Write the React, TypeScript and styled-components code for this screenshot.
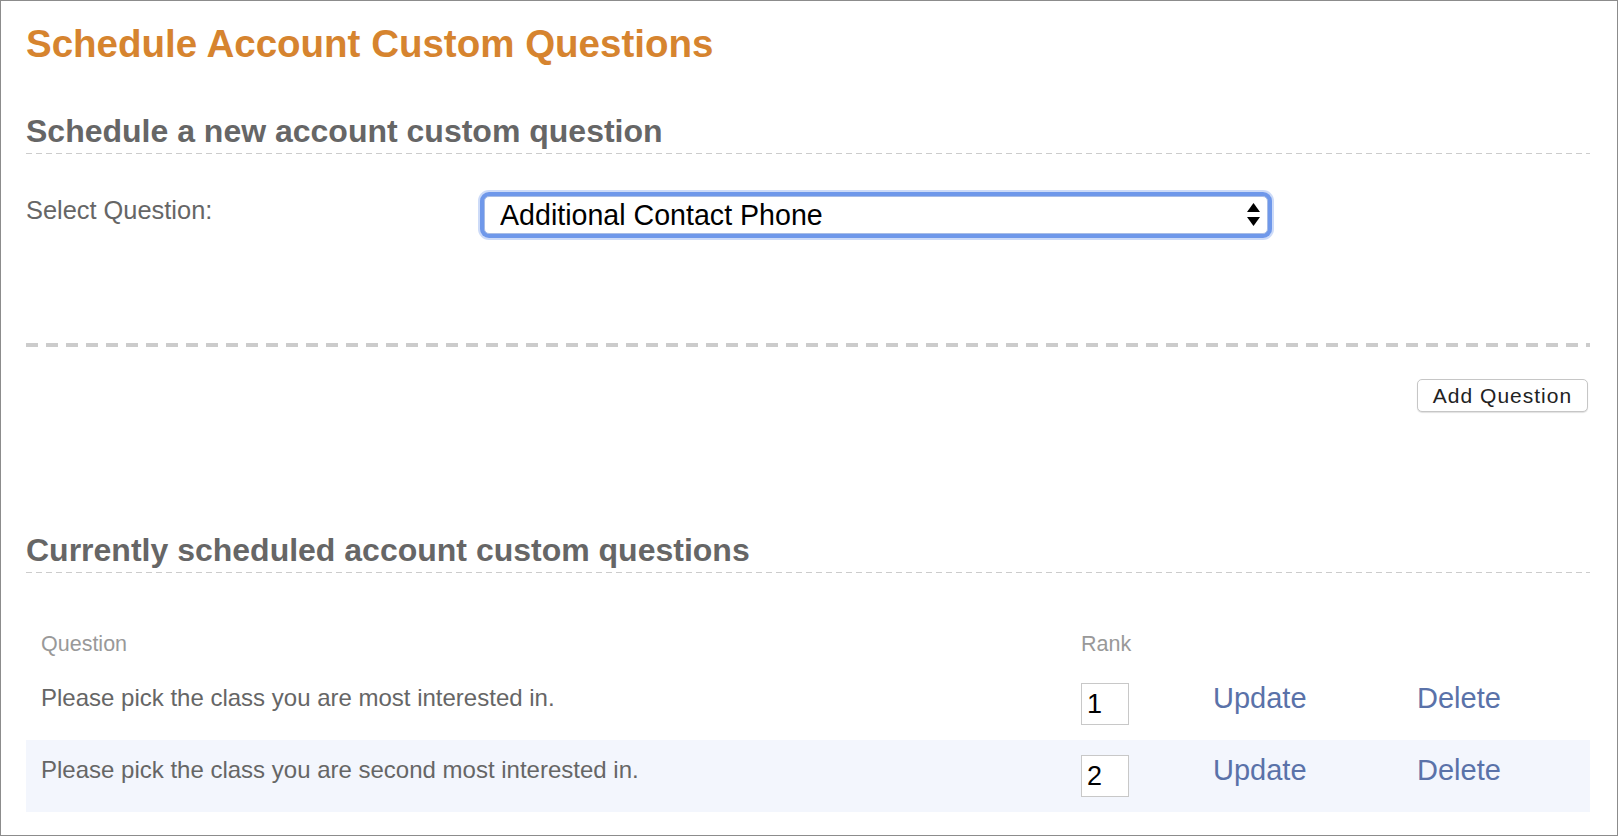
import React from 'react';
import styled, { createGlobalStyle } from 'styled-components';

const GlobalStyle = createGlobalStyle`
  html, body {
    margin: 0;
    padding: 0;
    background: #ffffff;
  }

  body {
    font-family: 'Liberation Sans', Arial, Helvetica, sans-serif;
  }

  * {
    box-sizing: border-box;
  }
`;

const questions = [
  { id: 1, text: 'Please pick the class you are most interested in.', rank: '1' },
  { id: 2, text: 'Please pick the class you are second most interested in.', rank: '2' },
];

const App = () => (
  <>
    <GlobalStyle />
    <Page>
      <Title>Schedule Account Custom Questions</Title>

      <SectionHeading $top={47}>Schedule a new account custom question</SectionHeading>

      <FormRow>
        <FieldLabel htmlFor="question">Select Question:</FieldLabel>
        <SelectWrap>
          <Select id="question" defaultValue="phone">
            <option value="phone">Additional Contact Phone</option>
          </Select>
          <SelectArrows width="13" height="24" viewBox="0 0 13 24">
            <path d="M6.5 0 L13 9 L0 9 Z" fill="#000" />
            <path d="M0 14 L13 14 L6.5 23 Z" fill="#000" />
          </SelectArrows>
        </SelectWrap>
      </FormRow>

      <ThickDivider />

      <Actions>
        <Button type="button">Add Question</Button>
      </Actions>

      <SectionHeading $top={120}>Currently scheduled account custom questions</SectionHeading>

      <Table>
        <HeaderRow>
          <span>Question</span>
          <span>Rank</span>
          <span />
          <span />
        </HeaderRow>
        {questions.map((item, index) => (
          <Row key={item.id} $striped={index % 2 === 1}>
            <QuestionText>{item.text}</QuestionText>
            <RankInput defaultValue={item.rank} />
            <ActionLink href="#">Update</ActionLink>
            <ActionLink href="#">Delete</ActionLink>
          </Row>
        ))}
      </Table>
    </Page>
  </>
);
export default App;

const Page = styled.div`
  width: 1618px;
  height: 836px;
  border: 1px solid #8c8c8c;
  padding: 21px 27px 0 25px;
  background: #ffffff;
  overflow: hidden;
`;

const Title = styled.h1`
  margin: 0;
  font-size: 38.5px;
  line-height: 44px;
  font-weight: 700;
  color: #d6842f;
`;

const SectionHeading = styled.h2<{ $top: number }>`
  margin: ${({ $top }) => $top}px 0 0;
  padding-bottom: 5px;
  font-size: 32px;
  line-height: 36px;
  font-weight: 700;
  color: #666666;
  background: linear-gradient(to right, #cccccc 60%, transparent 60%) left bottom / 10px 1px repeat-x;
`;

const FormRow = styled.div`
  display: flex;
  align-items: flex-start;
  margin-top: 41px;
`;

const FieldLabel = styled.label`
  width: 458px;
  font-size: 25.4px;
  line-height: 30px;
  color: #666666;
`;

const SelectWrap = styled.div`
  position: relative;
  width: 784px;
  height: 38px;
  margin-top: 1px;
`;

const Select = styled.select`
  width: 100%;
  height: 100%;
  padding: 0 36px 0 15px;
  appearance: none;
  font-family: 'Liberation Sans', Arial, Helvetica, sans-serif;
  font-size: 28.6px;
  color: #000000;
  background: #ffffff;
  border: 1px solid #a8bde6;
  border-radius: 5px;
  outline: none;
  box-shadow: 0 0 0 4px #6f98ea, 0 0 0 6px rgba(111, 152, 234, 0.35);
`;

const SelectArrows = styled.svg`
  position: absolute;
  right: 8px;
  top: 7px;
  pointer-events: none;
`;

const ThickDivider = styled.div`
  height: 4px;
  margin-top: 109px;
  background: linear-gradient(to right, #cccccc 12px, transparent 12px) left top / 20px 4px repeat-x;
`;

const Actions = styled.div`
  display: flex;
  justify-content: flex-end;
  margin-top: 32px;
  padding-right: 2px;
`;

const Button = styled.button`
  width: 171px;
  height: 33px;
  padding: 0;
  font-family: 'Liberation Sans', Arial, Helvetica, sans-serif;
  font-size: 21px;
  letter-spacing: 1px;
  color: #222222;
  background: #ffffff;
  border: 1px solid #c6c6c6;
  border-radius: 5px;
  box-shadow: 0 1px 1px rgba(0, 0, 0, 0.12);
  cursor: pointer;
`;

const Table = styled.div`
  margin-top: 43px;
`;

const columns = '1040px 132px 204px 1fr';

const HeaderRow = styled.div`
  display: grid;
  grid-template-columns: ${columns};
  height: 52px;
  padding: 15px 0 0 15px;
  font-size: 21.5px;
  line-height: 26px;
  color: #999999;
`;

const Row = styled.div<{ $striped: boolean }>`
  display: grid;
  grid-template-columns: ${columns};
  align-items: start;
  height: 72px;
  padding: 14px 0 0 15px;
  background: ${({ $striped }) => ($striped ? '#f3f6fd' : 'transparent')};
`;

const QuestionText = styled.span`
  margin-top: 2px;
  font-size: 24px;
  line-height: 27px;
  color: #666666;
`;

const RankInput = styled.input`
  width: 48px;
  height: 42px;
  margin-top: 1px;
  padding: 0 0 0 5px;
  font-family: 'Liberation Sans', Arial, Helvetica, sans-serif;
  font-size: 27px;
  color: #000000;
  background: #ffffff;
  border: 1px solid #c8c8c8;
  border-radius: 0;
  outline: none;
`;

const ActionLink = styled.a`
  font-size: 29px;
  line-height: 32px;
  color: #5a72a9;
  text-decoration: none;
`;
